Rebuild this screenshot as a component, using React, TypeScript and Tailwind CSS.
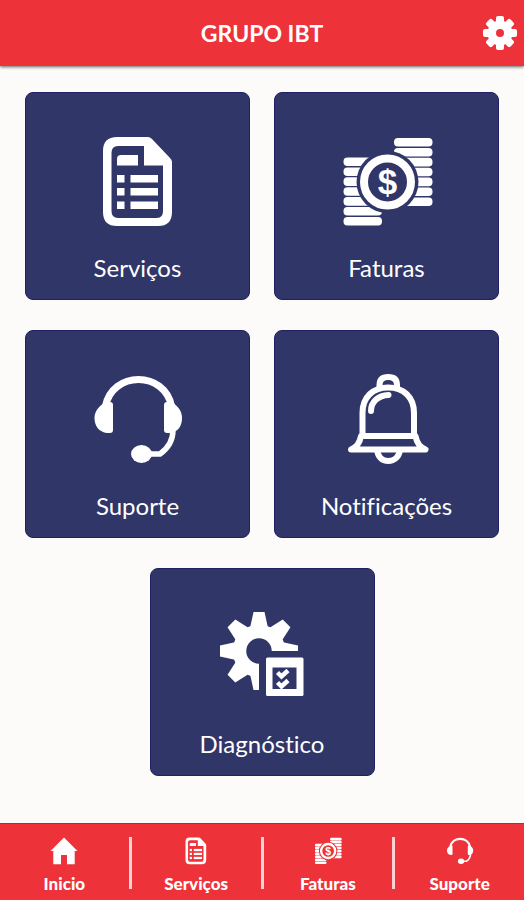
import type { ReactNode } from 'react'

function GearIcon({ className }: { className: string }) {
  return (
    <svg viewBox="0 0 36 36" className={className} aria-hidden="true">
      {[0, 45, 90, 135].map((a) => (
        <rect key={a} x="14" y="1" width="8" height="34" rx="2" transform={`rotate(${a} 18 18)`} fill="currentColor" />
      ))}
      <circle cx="18" cy="18" r="12.5" fill="currentColor" />
      <circle cx="18" cy="18" r="4" fill="#ee3239" />
    </svg>
  )
}

function HomeIcon({ className }: { className: string }) {
  return (
    <svg viewBox="0 0 28 28" className={className} aria-hidden="true">
      <path d="M14 0.5 27.5 14H24.7V27.3H17V18H11V27.3H3.3V14H0.5Z" fill="currentColor" />
    </svg>
  )
}

function DocumentIcon({ className }: { className: string }) {
  return (
    <svg viewBox="0 0 96 100" className={className} fill="currentColor" aria-hidden="true">
      <path
        fillRule="evenodd"
        d="M27 5H58Q60 5 62 7L80 26Q82 28 82 30V80Q82 94 68 94H27Q13 94 13 80V19Q13 5 27 5ZM28 14Q21.5 14 21.5 21V79Q21.5 86 28 86H67Q73 86 73 79V33.5H54V14Z"
      />
      <path d="M31 23H48V33.5H27V27Q27 23 31 23Z" />
      {[43, 56, 69.5].map((y) => (
        <g key={y}>
          <rect x="27" y={y} width="7.5" height="7.5" />
          <rect x="40.5" y={y} width="27.5" height="7.5" />
        </g>
      ))}
    </svg>
  )
}

function CoinsIcon({ className, back }: { className: string; back: string }) {
  return (
    <svg viewBox="0 0 96 100" className={className} fill="currentColor" aria-hidden="true">
      {[0, 1, 2, 3, 4, 5, 6].map((i) => (
        <g key={i}>
          <rect x="4.5" y={25.5 + i * 9.9} width="38.5" height="8.6" rx="4" />
          <rect x="55" y={6 + i * 9.9} width="38.5" height="8.6" rx="4" />
        </g>
      ))}
      <circle cx="48.5" cy="50" r="31" fill={back} />
      <circle cx="48.5" cy="50" r="23.5" fill="none" stroke="currentColor" strokeWidth="8" />
      <text
        x="48.5"
        y="62"
        textAnchor="middle"
        fontSize="35"
        fontWeight="700"
        fontFamily="'Liberation Sans', Arial, sans-serif"
      >
        $
      </text>
    </svg>
  )
}

function HeadsetIcon({ className }: { className: string }) {
  return (
    <svg viewBox="0 0 96 100" className={className} fill="currentColor" aria-hidden="true">
      <path d="M15.5 36C19 19 33 9.5 48.5 9.5S78 19 81.5 36" fill="none" stroke="currentColor" strokeWidth="7" />
      <path d="M14 33Q15 32 17 32H20Q23 32 23 35V60Q23 63 20 63H17C9 62 4.5 56 4.5 48C4.5 42 8 37 14 33Z" />
      <path d="M83 33Q82 32 80 32H77Q74 32 74 35V60Q74 63 77 63H80C88 62 92 56 92 48C92 42 89 37 83 33Z" />
      <path d="M83 60C83 71 77 79 70 84H58" fill="none" stroke="currentColor" strokeWidth="5.5" />
      <ellipse cx="51.5" cy="84" rx="10.5" ry="9" />
    </svg>
  )
}

function BellIcon({ className }: { className: string }) {
  return (
    <svg
      viewBox="0 0 96 100"
      className={className}
      fill="none"
      stroke="currentColor"
      strokeWidth="6"
      strokeLinecap="round"
      strokeLinejoin="round"
      aria-hidden="true"
    >
      <path d="M40.5 18V15C40.5 9 44 7 49.2 7S58 9 58 15V18" />
      <path d="M23.5 64V43C23.5 27 34 17.5 49.2 17.5S75 27 75 43V64" />
      <path d="M22 66H76.5C77.5 72 80.5 77 86.5 79.5H12C18 77 21 72 22 66Z" />
      <path d="M38 80C39 87 43 91 49.2 91S60 87 61 80" />
      <path d="M32 41C32 32 39 25.5 49.5 25" />
    </svg>
  )
}

function DiagnosticIcon({ className }: { className: string }) {
  return (
    <svg viewBox="0 0 96 100" className={className} fill="currentColor" aria-hidden="true">
      <clipPath id="gear-part">
        <path d="M0 0H96V43H45V96H0Z" />
      </clipPath>
      <g clipPath="url(#gear-part)">
        {[0, 45, 90, 180, 225, 270, 315].map((a) => (
          <path key={a} d="M36 20 39.5 4H50.5L54 20Z" transform={`rotate(${a} 45 43)`} />
        ))}
        <circle cx="45" cy="43" r="19.5" fill="none" stroke="currentColor" strokeWidth="13.5" />
      </g>
      <path
        fillRule="evenodd"
        d="M53.5 49.5H88Q89.5 49.5 89.5 51V86.5Q89.5 88 88 88H53.5Q52 88 52 86.5V51Q52 49.5 53.5 49.5ZM58.5 59.5V81H82.5V59.5Z"
      />
      <path d="M63.5 64.5 67.5 68.5 74 62.5M63.5 74.5 67.5 78.5 74 72.5" fill="none" stroke="currentColor" strokeWidth="4.5" />
    </svg>
  )
}

function Tile({ label, className = '', children }: { label: string; className?: string; children: ReactNode }) {
  return (
    <button
      type="button"
      className={`flex h-52 flex-col items-center gap-5 rounded-lg border border-[#201f62] bg-[#313669] pt-[39px] text-white ${className}`}
    >
      {children}
      <span className="text-2xl">{label}</span>
    </button>
  )
}

function NavItem({ label, children }: { label: string; children: ReactNode }) {
  return (
    <a href="#" className="flex flex-1 flex-col items-center gap-2">
      <span className="flex h-[30px] items-center">{children}</span>
      <span className="text-[17px] leading-5 font-black">{label}</span>
    </a>
  )
}

function Divider() {
  return <div className="mt-px h-[52px] w-[3px] shrink-0 bg-[#ffd3d3]" />
}

export default function App() {
  return (
    <div className="flex min-h-screen flex-col bg-[#fcfbfa] font-[Lato,sans-serif] [font-variant-ligatures:none]">
      <header className="grid h-[66px] grid-cols-[1fr_auto_1fr] items-center bg-[#ee3239] px-1.5 text-white shadow-[0_1px_3px_rgba(0,0,0,0.6)]">
        <h1 className="col-start-2 text-[23px] font-bold">GRUPO IBT</h1>
        <button type="button" aria-label="Configurações" className="justify-self-end">
          <GearIcon className="size-9" />
        </button>
      </header>

      <main className="grid flex-1 grid-cols-2 content-start gap-x-6 gap-y-[30px] px-[25px] py-[26px]">
        <Tile label="Serviços">
          <DocumentIcon className="h-[100px] w-24" />
        </Tile>
        <Tile label="Faturas">
          <CoinsIcon className="h-[100px] w-24" back="#313669" />
        </Tile>
        <Tile label="Suporte">
          <HeadsetIcon className="h-[100px] w-24" />
        </Tile>
        <Tile label="Notificações">
          <BellIcon className="h-[100px] w-24" />
        </Tile>
        <Tile label="Diagnóstico" className="col-span-2 w-[calc(50%-12px)] justify-self-center">
          <DiagnosticIcon className="h-[100px] w-24" />
        </Tile>
      </main>

      <nav className="flex h-[77px] items-start border-t border-[#e01820] bg-[#ee3239] pt-3 text-white">
        <NavItem label="Inicio">
          <HomeIcon className="size-7" />
        </NavItem>
        <Divider />
        <NavItem label="Serviços">
          <DocumentIcon className="size-[30px]" />
        </NavItem>
        <Divider />
        <NavItem label="Faturas">
          <CoinsIcon className="size-[30px]" back="#ee3239" />
        </NavItem>
        <Divider />
        <NavItem label="Suporte">
          <HeadsetIcon className="size-[30px]" />
        </NavItem>
      </nav>
    </div>
  )
}
